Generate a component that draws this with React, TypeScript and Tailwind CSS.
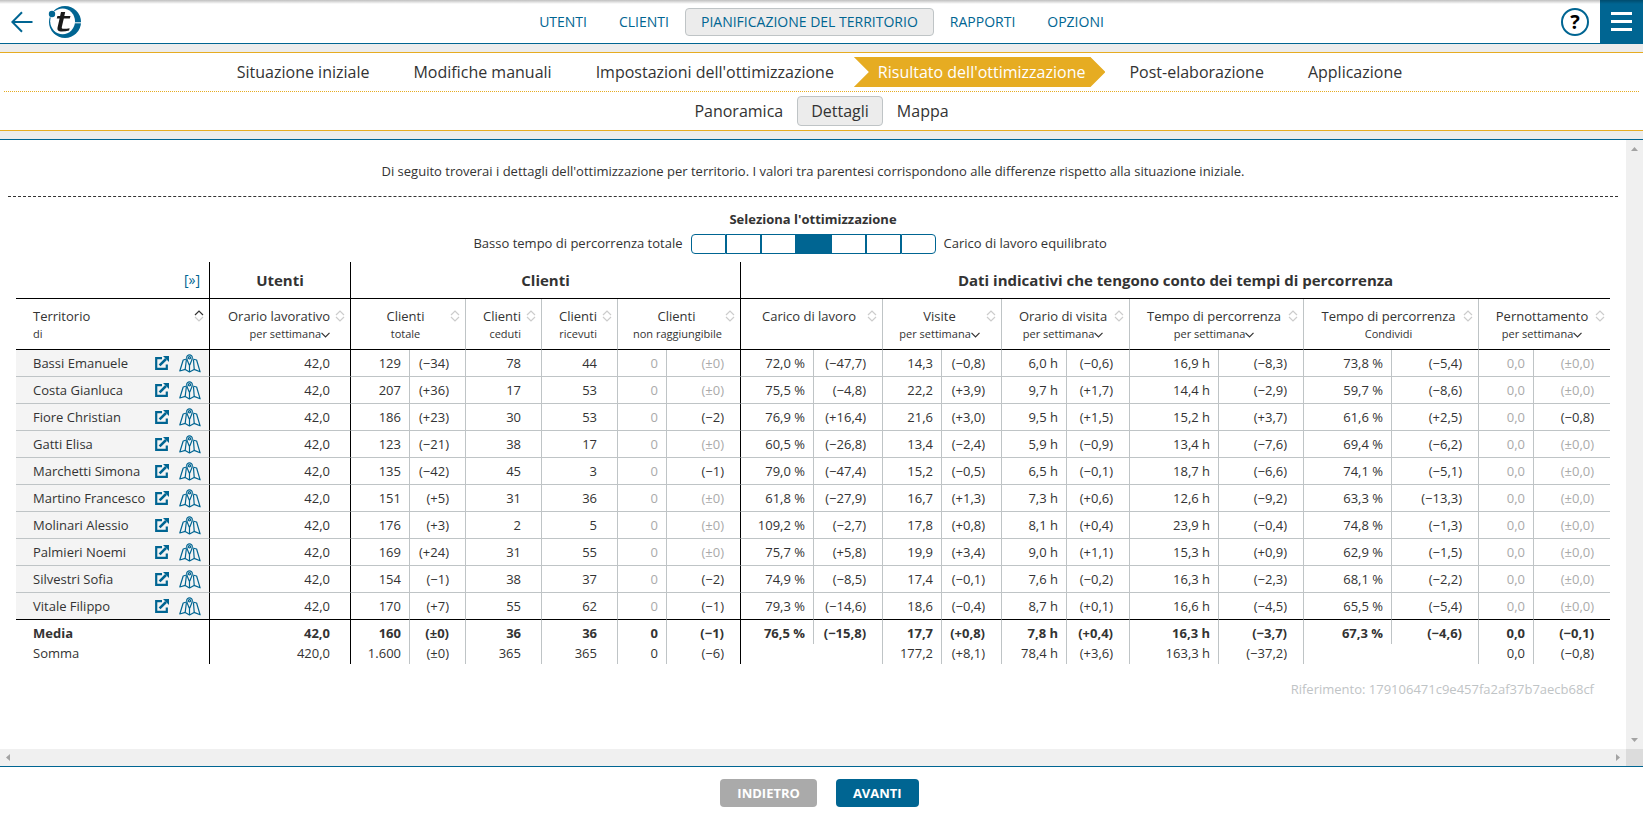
import { useState } from "react";
import { clsx } from "clsx";

interface Column {
    title: string;
    sub?: string;
    dropdown?: boolean;
    span: number;
    groupEnd?: boolean;
}

const mainNav = ["UTENTI", "CLIENTI", "PIANIFICAZIONE DEL TERRITORIO", "RAPPORTI", "OPZIONI"];

const steps = [
    "Situazione iniziale",
    "Modifiche manuali",
    "Impostazioni dell'ottimizzazione",
    "Risultato dell'ottimizzazione",
    "Post-elaborazione",
    "Applicazione",
];

const tabs = ["Panoramica", "Dettagli", "Mappa"];

const colWidths = [194, 141, 59, 56, 76, 76, 49, 74, 73, 69, 59, 60, 65, 63, 89, 85, 88, 87, 55, 76];

const columns: Column[] = [
    { title: "Orario lavorativo", sub: "per settimana", dropdown: true, span: 1, groupEnd: true },
    { title: "Clienti", sub: "totale", span: 2 },
    { title: "Clienti", sub: "ceduti", span: 1 },
    { title: "Clienti", sub: "ricevuti", span: 1 },
    { title: "Clienti", sub: "non raggiungibile", span: 2, groupEnd: true },
    { title: "Carico di lavoro", span: 2 },
    { title: "Visite", sub: "per settimana", dropdown: true, span: 2 },
    { title: "Orario di visita", sub: "per settimana", dropdown: true, span: 2 },
    { title: "Tempo di percorrenza", sub: "per settimana", dropdown: true, span: 2 },
    { title: "Tempo di percorrenza", sub: "Condividi", span: 2 },
    { title: "Pernottamento", sub: "per settimana", dropdown: true, span: 2 },
];

// one entry per value column, territory name first
const rows: string[][] = [
    ["Bassi Emanuele", "42,0", "129", "(−34)", "78", "44", "0", "(±0)", "72,0 %", "(−47,7)", "14,3", "(−0,8)", "6,0 h", "(−0,6)", "16,9 h", "(−8,3)", "73,8 %", "(−5,4)", "0,0", "(±0,0)"],
    ["Costa Gianluca", "42,0", "207", "(+36)", "17", "53", "0", "(±0)", "75,5 %", "(−4,8)", "22,2", "(+3,9)", "9,7 h", "(+1,7)", "14,4 h", "(−2,9)", "59,7 %", "(−8,6)", "0,0", "(±0,0)"],
    ["Fiore Christian", "42,0", "186", "(+23)", "30", "53", "0", "(−2)", "76,9 %", "(+16,4)", "21,6", "(+3,0)", "9,5 h", "(+1,5)", "15,2 h", "(+3,7)", "61,6 %", "(+2,5)", "0,0", "(−0,8)"],
    ["Gatti Elisa", "42,0", "123", "(−21)", "38", "17", "0", "(±0)", "60,5 %", "(−26,8)", "13,4", "(−2,4)", "5,9 h", "(−0,9)", "13,4 h", "(−7,6)", "69,4 %", "(−6,2)", "0,0", "(±0,0)"],
    ["Marchetti Simona", "42,0", "135", "(−42)", "45", "3", "0", "(−1)", "79,0 %", "(−47,4)", "15,2", "(−0,5)", "6,5 h", "(−0,1)", "18,7 h", "(−6,6)", "74,1 %", "(−5,1)", "0,0", "(±0,0)"],
    ["Martino Francesco", "42,0", "151", "(+5)", "31", "36", "0", "(±0)", "61,8 %", "(−27,9)", "16,7", "(+1,3)", "7,3 h", "(+0,6)", "12,6 h", "(−9,2)", "63,3 %", "(−13,3)", "0,0", "(±0,0)"],
    ["Molinari Alessio", "42,0", "176", "(+3)", "2", "5", "0", "(±0)", "109,2 %", "(−2,7)", "17,8", "(+0,8)", "8,1 h", "(+0,4)", "23,9 h", "(−0,4)", "74,8 %", "(−1,3)", "0,0", "(±0,0)"],
    ["Palmieri Noemi", "42,0", "169", "(+24)", "31", "55", "0", "(±0)", "75,7 %", "(+5,8)", "19,9", "(+3,4)", "9,0 h", "(+1,1)", "15,3 h", "(+0,9)", "62,9 %", "(−1,5)", "0,0", "(±0,0)"],
    ["Silvestri Sofia", "42,0", "154", "(−1)", "38", "37", "0", "(−2)", "74,9 %", "(−8,5)", "17,4", "(−0,1)", "7,6 h", "(−0,2)", "16,3 h", "(−2,3)", "68,1 %", "(−2,2)", "0,0", "(±0,0)"],
    ["Vitale Filippo", "42,0", "170", "(+7)", "55", "62", "0", "(−1)", "79,3 %", "(−14,6)", "18,6", "(−0,4)", "8,7 h", "(+0,1)", "16,6 h", "(−4,5)", "65,5 %", "(−5,4)", "0,0", "(±0,0)"],
];

const average = ["Media", "42,0", "160", "(±0)", "36", "36", "0", "(−1)", "76,5 %", "(−15,8)", "17,7", "(+0,8)", "7,8 h", "(+0,4)", "16,3 h", "(−3,7)", "67,3 %", "(−4,6)", "0,0", "(−0,1)"];
const total = ["Somma", "420,0", "1.600", "(±0)", "365", "365", "0", "(−6)", "", "", "177,2", "(+8,1)", "78,4 h", "(+3,6)", "163,3 h", "(−37,2)", "", "", "0,0", "(−0,8)"];

const singleCols = [1, 4, 5];
const groupEnds = [1, 7];
const firstOfPair = [2, 6, 8, 10, 12, 14, 16, 18];

function cellClass(index: number, value: string) {
    return clsx(
        "text-right whitespace-nowrap",
        singleCols.includes(index) ? "pr-5" : firstOfPair.includes(index) ? "pr-2" : "pr-4",
        groupEnds.includes(index)
            ? "border-r border-r-black"
            : index !== 19 && !(value === "" && firstOfPair.includes(index)) && "border-r border-r-[#bfc4c6]"
    );
}

function SortIcon({ ascending = false }: { ascending?: boolean }) {
    return (
        <svg width="10" height="12" viewBox="0 0 10 12" fill="none" strokeWidth="1.2" aria-hidden="true">
            <path d="M1 5 5 1l4 4" stroke={ascending ? "#333" : "#ccc"} />
            <path d="m1 7 4 4 4-4" stroke="#ccc" />
        </svg>
    );
}

function OpenIcon() {
    return (
        <svg width="14" height="14" viewBox="0 0 14 14" fill="none" aria-hidden="true">
            <path d="M7 2.2H1.200v10.600H11.800V8.500" stroke="#006592" strokeWidth="2.2" />
            <path d="m4.600 9.400 6.400-6.400" stroke="#006592" strokeWidth="2.500" />
            <path d="M8 0h6v6z" fill="#006592" />
        </svg>
    );
}

function MapIcon() {
    return (
        <svg width="22" height="19" viewBox="0 0 22 19" fill="none" stroke="#006592" strokeWidth="1.2" strokeLinejoin="round" aria-hidden="true">
            <path d="M7.500 5 4.200 6 .8 17l5.400-1.600L10.500 18l4.600-2.600 6 2.400L17.600 6l-4-1" />
            <path d="M7.400 5.500 6.200 15.200M10.500 12v6M14.500 6l.7 9.200" />
            <path d="M10.500 11.500C9.200 8.500 7.700 6 7.700 3.600a2.800 2.800 0 0 1 5.600 0c0 2.400-1.500 4.900-2.800 7.900z" />
            <circle cx="10.500" cy="3.700" r="1.100" />
        </svg>
    );
}

function Logo() {
    return (
        <svg width="34" height="34" viewBox="0 0 34 34" role="img" aria-label="portatour">
            <circle cx="17" cy="17" r="16" fill="#006592" />
            <ellipse cx="14.600" cy="16.300" rx="12.400" ry="12.900" fill="#fff" />
            <path d="M25 17.800h9" stroke="#fff" />
            <circle cx="4" cy="9" r="3.800" fill="#fff" />
            <circle cx="4" cy="9" r="3.200" fill="#006592" />
            <path
                fill="#1a1a1a"
                d="M13 7h4.200l-.9 4h6.200l-.7 2.500h-6l-2 8.500c-.3 1.500.5 1.800 2 1.800 2 0 4-.2 5.800-.6l-.5 2.400c-2.300.7-4.800 1-7.300 1-3.300 0-4.900-1.300-4.200-4.300l2-8.800H8.800l.6-2.500h2.700z"
            />
        </svg>
    );
}

function SummaryRow({ values, bold = false }: { values: string[]; bold?: boolean }) {
    const spacing = bold ? "pt-[3px] pb-px" : "pb-[2px] leading-[18px]";
    return (
        <tr className={bold ? "h-6 font-bold" : "h-5"}>
            <th
                scope="row"
                className={clsx("border-r border-r-black pl-[17px] text-left", spacing, bold ? "font-bold" : "font-normal")}
            >
                {values[0]}
            </th>
            {values.slice(1).map((value, i) => (
                <td key={i} className={clsx(cellClass(i + 1, value), spacing)}>
                    {value}
                </td>
            ))}
        </tr>
    );
}

export default function App() {
    const [level, setLevel] = useState(3);

    return (
        <div className="flex h-screen flex-col bg-white font-['Open_Sans',sans-serif] text-[13px] leading-5 text-[#333]">
            <header className="relative flex h-11 shrink-0 items-center border-b border-[#006592]">
                <div className="flex flex-1 items-center gap-[15px]">
                    <button aria-label="Indietro" className="ml-[11px]">
                        <svg width="22" height="22" viewBox="0 0 22 22" fill="none" stroke="#006592" strokeWidth="2" aria-hidden="true">
                            <path d="M21.500 11H1.500M11 1.200 1.300 11 11 20.800" />
                        </svg>
                    </button>
                    <Logo />
                </div>
                <nav className="flex text-sm font-medium text-[#006592]">
                    {mainNav.map((item, i) => (
                        <a
                            key={item}
                            href="#"
                            className={clsx(
                                "rounded border px-[15px] py-[3px]",
                                i === 2 ? "border-[#bfc4c6] bg-[#ececec]" : "border-transparent"
                            )}
                        >
                            {item}
                        </a>
                    ))}
                </nav>
                <div className="flex flex-1 items-center justify-end gap-[11px] self-stretch">
                    <button
                        aria-label="Aiuto"
                        className="flex size-7 items-center justify-center rounded-full border-2 border-[#006592] text-xl font-bold text-black"
                    >
                        ?
                    </button>
                    <button aria-label="Menu" className="flex w-[43px] flex-col items-center justify-center gap-[5px] self-stretch bg-[#006592]">
                        <span className="h-[3px] w-[21px] bg-white" />
                        <span className="h-[3px] w-[21px] bg-white" />
                        <span className="h-[3px] w-[21px] bg-white" />
                    </button>
                </div>
                <div className="pointer-events-none absolute inset-x-0 top-0 h-1 bg-gradient-to-b from-black/25 to-transparent" />
            </header>

            <div className="shrink-0 border-b border-[#006592] bg-[#ececec] py-2">
                <div className="border-y border-[#e6ac22] bg-white text-base">
                    <nav className="mx-1 flex justify-center border-b border-dotted border-[#e6ac22] py-1 pr-2">
                        {steps.map((step, i) => (
                            <a
                                key={step}
                                href="#"
                                className={clsx(
                                    "pr-5 pl-6 leading-[30px]",
                                    i === 3 &&
                                        "bg-[#e6ac22] text-white [clip-path:polygon(0_0,calc(100%-15px)_0,100%_50%,calc(100%-15px)_100%,0_100%,15px_50%)]"
                                )}
                            >
                                {step}
                            </a>
                        ))}
                    </nav>
                    <nav className="flex justify-center py-1">
                        {tabs.map((tab, i) => (
                            <a
                                key={tab}
                                href="#"
                                className={clsx(
                                    "rounded border px-[13px] leading-7",
                                    i === 1 ? "border-[#bfc4c6] bg-[#ececec]" : "border-transparent"
                                )}
                            >
                                {tab}
                            </a>
                        ))}
                    </nav>
                </div>
            </div>

            <div className="flex min-h-0 flex-1">
                <main className="min-w-0 flex-1 overflow-hidden px-2">
                    <p className="border-b border-dashed border-[#333] pt-[21px] pb-[15px] text-center">
                        Di seguito troverai i dettagli dell'ottimizzazione per territorio. I valori tra parentesi corrispondono alle
                        differenze rispetto alla situazione iniziale.
                    </p>

                    <div role="radiogroup" aria-labelledby="level-title" className="pt-3">
                        <div id="level-title" className="text-center font-bold">Seleziona l'ottimizzazione</div>
                        <div className="mt-1 grid grid-cols-[1fr_auto_1fr] items-start gap-2">
                            <span className="text-right">Basso tempo di percorrenza totale</span>
                            <div className="flex pt-px">
                                {[0, 1, 2, 3, 4, 5, 6].map((n) => (
                                    <input
                                        key={n}
                                        type="radio"
                                        name="level"
                                        aria-label={`Livello ${n + 1}`}
                                        checked={level === n}
                                        onChange={() => setLevel(n)}
                                        className="h-5 w-[35px] appearance-none border border-[#006592] first:rounded-l last:rounded-r checked:bg-[#006592]"
                                    />
                                ))}
                            </div>
                            <span>Carico di lavoro equilibrato</span>
                        </div>
                    </div>

                    <div className="mt-2 px-2">
                        <table className="w-full table-fixed border-separate border-spacing-0">
                            <colgroup>
                                {colWidths.map((w, i) => (
                                    <col key={i} style={{ width: w }} />
                                ))}
                            </colgroup>
                            <thead>
                                <tr className="h-[37px] text-[15px]">
                                    <td className="border-r border-b border-black pr-[9px] text-right text-sm">
                                        <a href="#" className="text-[#006592]">[»]</a>
                                    </td>
                                    <th className="border-r border-b border-black">Utenti</th>
                                    <th colSpan={6} className="border-r border-b border-black">Clienti</th>
                                    <th colSpan={12} className="border-b border-black">
                                        Dati indicativi che tengono conto dei tempi di percorrenza
                                    </th>
                                </tr>
                                <tr className="h-[51px]">
                                    <th className="relative border-r border-b border-black pt-[7px] pl-[17px] text-left align-top font-normal">
                                        <div>Territorio</div>
                                        <div className="text-[11px] leading-4">di</div>
                                        <button aria-label="Ordina per territorio" className="absolute top-[11px] right-[5px]">
                                            <SortIcon ascending />
                                        </button>
                                    </th>
                                    {columns.map((col, i) => (
                                        <th
                                            key={i}
                                            colSpan={col.span}
                                            className={clsx(
                                                "relative border-b border-b-black pt-[7px] pr-5 align-top font-normal whitespace-nowrap",
                                                col.span === 1 ? "text-right" : "pl-[15px] text-center",
                                                col.groupEnd ? "border-r border-r-black" : i < columns.length - 1 && "border-r border-r-[#bfc4c6]"
                                            )}
                                        >
                                            <div className={clsx(col.span === 2 && "-mx-2")}>{col.title}</div>
                                            <div className="text-[11px] leading-4">
                                                {col.dropdown ? (
                                                    <button className="align-top">
                                                        {col.sub}
                                                        <svg width="9" height="7" viewBox="0 0 9 7" fill="none" stroke="#333" strokeWidth="1.2" className="inline-block" aria-hidden="true">
                                                            <path d="m.5 .8 4 4 4-4" />
                                                        </svg>
                                                    </button>
                                                ) : (
                                                    col.sub
                                                )}
                                            </div>
                                            <button aria-label={`Ordina per ${col.title}`} className="absolute top-[11px] right-[5px]">
                                                <SortIcon />
                                            </button>
                                        </th>
                                    ))}
                                </tr>
                            </thead>
                            <tbody>
                                {rows.map((row, r) => {
                                    const line = r === rows.length - 1 ? "border-b border-b-black" : "border-b border-b-[#bfc4c6]";
                                    return (
                                        <tr key={row[0]} className="h-[27px]">
                                            <th scope="row" className={clsx("border-r border-r-black bg-[#f4f4f4] pr-2 pl-[17px] font-normal", line)}>
                                                <div className="flex items-center">
                                                    <span className="flex-1 text-left whitespace-nowrap">{row[0]}</span>
                                                    <a href="#" aria-label={`Apri ${row[0]}`} className="mr-[10px]">
                                                        <OpenIcon />
                                                    </a>
                                                    <a href="#" aria-label={`Mappa ${row[0]}`}>
                                                        <MapIcon />
                                                    </a>
                                                </div>
                                            </th>
                                            {row.slice(1).map((value, i) => (
                                                <td
                                                    key={i}
                                                    className={clsx(
                                                        cellClass(i + 1, value),
                                                        line,
                                                        /^(0|0,0|\(±.*)$/.test(value) && "text-[#aaa]"
                                                    )}
                                                >
                                                    {value}
                                                </td>
                                            ))}
                                        </tr>
                                    );
                                })}
                            </tbody>
                            <tfoot>
                                <SummaryRow values={average} bold />
                                <SummaryRow values={total} />
                            </tfoot>
                        </table>
                        <p className="mt-[15px] pr-4 text-right text-[#bfc4c6]">Riferimento: 179106471c9e457fa2af37b7aecb68cf</p>
                    </div>
                </main>
                <div className="flex w-[17px] shrink-0 flex-col items-center justify-between bg-[#f0f0f0] py-[7px]" aria-hidden="true">
                    <svg width="7" height="4" viewBox="0 0 7 4" fill="#a3a3a3"><path d="M0 4 3.500 0 7 4z" /></svg>
                    <svg width="7" height="4" viewBox="0 0 7 4" fill="#a3a3a3"><path d="M0 0h7L3.500 4z" /></svg>
                </div>
            </div>

            <div className="flex h-[17px] shrink-0 bg-[#f0f0f0]" aria-hidden="true">
                <div className="flex flex-1 items-center justify-between px-[6px]">
                    <svg width="4" height="7" viewBox="0 0 4 7" fill="#a3a3a3"><path d="M4 0v7L0 3.500z" /></svg>
                    <svg width="4" height="7" viewBox="0 0 4 7" fill="#a3a3a3"><path d="M0 0v7l4-3.500z" /></svg>
                </div>
                <div className="w-[17px] bg-[#dcdcdc]" />
            </div>

            <footer className="flex h-[50px] shrink-0 items-start justify-center gap-[19px] border-t border-[#006592] pt-3 pr-1 font-bold text-white">
                <button className="h-7 rounded bg-[#aaa] px-[17px]">INDIETRO</button>
                <button className="h-7 rounded bg-[#006592] px-[17px]">AVANTI</button>
            </footer>
        </div>
    );
}
